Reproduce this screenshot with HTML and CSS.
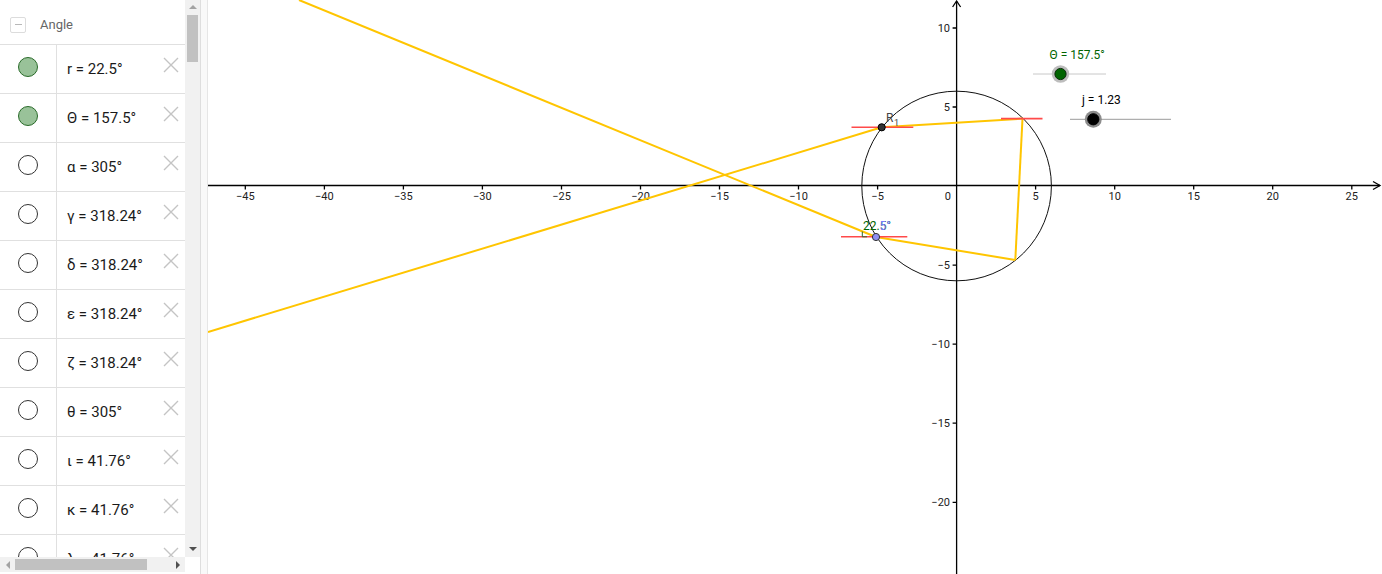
FILE: index.html
```html
<!DOCTYPE html>
<html>
<head>
<meta charset="utf-8">
<title>Angle</title>
<link rel="stylesheet" href="styles.css">
</head>
<body>
<div class="app">
  <div class="panel">
    <div class="list">
      <div class="header"><span class="collapse"><span class="minus"></span></span><span class="title">Angle</span></div>
      <div class="row"><div class="marker"><span class="dot on"></span></div><div class="cell"><span class="expr">r = 22.5°</span><svg class="del" viewBox="0 0 16 16"><path d="M1 1L15 15M15 1L1 15"/></svg></div></div>
      <div class="row"><div class="marker"><span class="dot on"></span></div><div class="cell"><span class="expr">Θ = 157.5°</span><svg class="del" viewBox="0 0 16 16"><path d="M1 1L15 15M15 1L1 15"/></svg></div></div>
      <div class="row"><div class="marker"><span class="dot"></span></div><div class="cell"><span class="expr">α = 305°</span><svg class="del" viewBox="0 0 16 16"><path d="M1 1L15 15M15 1L1 15"/></svg></div></div>
      <div class="row"><div class="marker"><span class="dot"></span></div><div class="cell"><span class="expr">γ = 318.24°</span><svg class="del" viewBox="0 0 16 16"><path d="M1 1L15 15M15 1L1 15"/></svg></div></div>
      <div class="row"><div class="marker"><span class="dot"></span></div><div class="cell"><span class="expr">δ = 318.24°</span><svg class="del" viewBox="0 0 16 16"><path d="M1 1L15 15M15 1L1 15"/></svg></div></div>
      <div class="row"><div class="marker"><span class="dot"></span></div><div class="cell"><span class="expr">ε = 318.24°</span><svg class="del" viewBox="0 0 16 16"><path d="M1 1L15 15M15 1L1 15"/></svg></div></div>
      <div class="row"><div class="marker"><span class="dot"></span></div><div class="cell"><span class="expr">ζ = 318.24°</span><svg class="del" viewBox="0 0 16 16"><path d="M1 1L15 15M15 1L1 15"/></svg></div></div>
      <div class="row"><div class="marker"><span class="dot"></span></div><div class="cell"><span class="expr">θ = 305°</span><svg class="del" viewBox="0 0 16 16"><path d="M1 1L15 15M15 1L1 15"/></svg></div></div>
      <div class="row"><div class="marker"><span class="dot"></span></div><div class="cell"><span class="expr">ι = 41.76°</span><svg class="del" viewBox="0 0 16 16"><path d="M1 1L15 15M15 1L1 15"/></svg></div></div>
      <div class="row"><div class="marker"><span class="dot"></span></div><div class="cell"><span class="expr">κ = 41.76°</span><svg class="del" viewBox="0 0 16 16"><path d="M1 1L15 15M15 1L1 15"/></svg></div></div>
      <div class="row"><div class="marker"><span class="dot"></span></div><div class="cell"><span class="expr">λ = 41.76°</span><svg class="del" viewBox="0 0 16 16"><path d="M1 1L15 15M15 1L1 15"/></svg></div></div>
    </div>
    <div class="vscroll">
      <span class="btn"><span class="tri up"></span></span>
      <span class="vthumb"></span>
      <span class="spacer"></span>
      <span class="btn"><span class="tri down"></span></span>
    </div>
    <div class="hscroll">
      <span class="btn"><span class="tri left"></span></span>
      <span class="hthumb"></span>
      <span class="spacer"></span>
      <span class="btn"><span class="tri right"></span></span>
    </div>
    <div class="corner"></div>
  </div>
  <div class="divider"></div>
  <div class="graphics">
    <svg class="canvas" width="1174" height="574" viewBox="208 0 1174 574">
      <g class="ticklabels">
        <text x="245.3" y="200" text-anchor="middle">−45</text>
        <text x="324.4" y="200" text-anchor="middle">−40</text>
        <text x="403.4" y="200" text-anchor="middle">−35</text>
        <text x="482.4" y="200" text-anchor="middle">−30</text>
        <text x="561.5" y="200" text-anchor="middle">−25</text>
        <text x="640.5" y="200" text-anchor="middle">−20</text>
        <text x="719.5" y="200" text-anchor="middle">−15</text>
        <text x="798.5" y="200" text-anchor="middle">−10</text>
        <text x="877.6" y="200" text-anchor="middle">−5</text>
        <text x="951" y="200" text-anchor="end">0</text>
        <text x="1035.6" y="200" text-anchor="middle">5</text>
        <text x="1114.7" y="200" text-anchor="middle">10</text>
        <text x="1193.7" y="200" text-anchor="middle">15</text>
        <text x="1272.7" y="200" text-anchor="middle">20</text>
        <text x="1351.8" y="200" text-anchor="middle">25</text>
        <text x="950" y="32" text-anchor="end">10</text>
        <text x="950" y="111" text-anchor="end">5</text>
        <text x="950" y="269" text-anchor="end">−5</text>
        <text x="950" y="348" text-anchor="end">−10</text>
        <text x="950" y="427" text-anchor="end">−15</text>
        <text x="950" y="506" text-anchor="end">−20</text>
      </g>
      <g class="axes">
        <line x1="208" y1="185.5" x2="1380" y2="185.5"/>
        <polyline points="1373,181.5 1380,185.5 1373,189.5"/>
        <line x1="956.6" y1="1" x2="956.6" y2="574"/>
        <polyline points="952.6,7 956.6,1 960.6,7"/>
        <path d="M245.3 185.5v4M324.4 185.5v4M403.4 185.5v4M482.4 185.5v4M561.5 185.5v4M640.5 185.5v4M719.5 185.5v4M798.5 185.5v4M877.6 185.5v4M1035.6 185.5v4M1114.7 185.5v4M1193.7 185.5v4M1272.7 185.5v4M1351.8 185.5v4"/>
        <path d="M952.6 28h4M952.6 107h4M952.6 265.1h4M952.6 344.2h4M952.6 423.2h4M952.6 502.3h4"/>
      </g>
      <circle class="circ" cx="956.6" cy="186" r="94.8"/>
      <g class="yellow">
        <line x1="299" y1="0" x2="876" y2="237"/>
        <line x1="208" y1="332" x2="881.7" y2="127.3"/>
        <line x1="881.7" y1="127.3" x2="1022.5" y2="118.6"/>
        <line x1="1022.5" y1="118.6" x2="1015.3" y2="260"/>
        <line x1="1015.3" y1="260" x2="876" y2="237"/>
      </g>
      <g class="red">
        <line x1="851.5" y1="127.3" x2="913.3" y2="127.3"/>
        <line x1="1001" y1="118.6" x2="1042.5" y2="118.6"/>
        <line x1="841" y1="236.8" x2="907.3" y2="236.8"/>
      </g>
      <polyline class="amark" points="862.3,231.5 862.3,236.8 867,236.8"/>
      <text class="lbl-r" x="886" y="121.5">R<tspan class="sub" dx="0.5" dy="4">1</tspan></text>
      <text class="lbl-g" x="863" y="229.5">22.5°</text>
      <text class="lbl-b" x="879.5" y="229.5">5°</text>
      <circle class="pt-dark" cx="881.7" cy="127.3" r="3.6"/>
      <circle class="pt-blue" cx="876" cy="237" r="3.6"/>
      <g class="slider">
        <line class="track-light" x1="1033" y1="74" x2="1106" y2="74"/>
        <circle class="halo-light" cx="1060.5" cy="74" r="8.7"/>
        <circle class="knob-green" cx="1060.5" cy="74" r="5.6"/>
        <text class="lbl-theta" x="1049.5" y="58.7">Θ = 157.5°</text>
      </g>
      <g class="slider">
        <line class="track-dark" x1="1070" y1="119.3" x2="1171" y2="119.3"/>
        <circle class="halo-dark" cx="1093.3" cy="119.3" r="8.5"/>
        <circle class="knob-black" cx="1093.3" cy="119.3" r="5.6"/>
        <text class="lbl-j" x="1082" y="104">j = 1.23</text>
      </g>
    </svg>
  </div>
</div>
</body>
</html>
```

FILE: styles.css
```css
* { box-sizing: border-box; }
html, body { margin: 0; padding: 0; background: #fff; }
body { font-family: Roboto, "Noto Sans", "DejaVu Sans", sans-serif; overflow: hidden; }

.app { display: flex; width: 1382px; height: 574px; overflow: hidden; }

.panel {
  width: 200px;
  height: 574px;
  display: grid;
  grid-template-columns: 185px 15px;
  grid-template-rows: 557px 15px;
  align-content: start;
  background: #fff;
}

.list { overflow: hidden; height: 557px; }

.header {
  height: 45px;
  border-bottom: 1px solid #e0e0e0;
  display: flex;
  align-items: center;
  padding: 5px 0 0 10px;
}
.collapse {
  width: 16px; height: 16px;
  border: 1px solid #dcdcdc;
  border-radius: 2px;
  display: flex; align-items: center; justify-content: center;
}
.minus { width: 7px; height: 1px; background: #b8b8b8; }
.title { margin-left: 14px; font-size: 13px; color: #666; }

.row {
  height: 49px;
  border-bottom: 1px solid #e0e0e0;
  display: flex;
}
.marker {
  width: 57px;
  border-right: 1px solid #e0e0e0;
  display: flex;
  justify-content: center;
  padding-top: 12px;
}
.dot {
  width: 20px; height: 20px;
  border-radius: 50%;
  border: 1px solid #333;
  background: #fff;
  margin-left: -1px;
}
.dot.on { background: #99c299; border-color: #2a6b2a; }

.cell {
  flex: 1;
  display: flex;
  align-items: center;
  padding-left: 10px;
  padding-bottom: 1px;
}
.expr { font-size: 15px; color: #1a1a1a; white-space: nowrap; }
.del {
  width: 16px; height: 16px;
  margin-left: auto;
  margin-right: 6px;
  align-self: flex-start;
  margin-top: 12px;
  flex: none;
}
.del path { stroke: #c4c4c4; stroke-width: 1.4; fill: none; }

.vscroll {
  background: #f1f1f1;
  display: flex;
  flex-direction: column;
  height: 557px;
}
.hscroll {
  background: #f1f1f1;
  display: flex;
  flex-direction: row;
}
.corner { background: #fff; }
.btn { flex: none; width: 15px; height: 15px; display: flex; align-items: center; justify-content: center; }
.spacer { flex: 1; }
.vthumb { flex: none; height: 47px; margin: 0 2px; background: #c1c1c1; }
.hthumb { flex: none; width: 132px; height: 11px; margin-top: 2px; background: #c1c1c1; }
.tri { width: 0; height: 0; }
.tri.up { border-left: 4px solid transparent; border-right: 4px solid transparent; border-bottom: 4px solid #a3a3a3; margin-top: -1px; }
.tri.down { border-left: 4px solid transparent; border-right: 4px solid transparent; border-top: 4px solid #505050; margin-top: -1px; }
.tri.left { border-top: 4px solid transparent; border-bottom: 4px solid transparent; border-right: 4px solid #a3a3a3; }
.tri.right { border-top: 4px solid transparent; border-bottom: 4px solid transparent; border-left: 4px solid #505050; }

.divider {
  width: 8px;
  height: 574px;
  background: #f9f9f9;
  border-left: 1px solid #dedede;
  border-right: 1px solid #e6e6e6;
}

.graphics { flex: 1; height: 574px; overflow: hidden; background: #fff; }
.canvas { display: block; }

.ticklabels text { font-family: Roboto, "Noto Sans", sans-serif; font-size: 11px; fill: #222; }
.axes line, .axes polyline, .axes path { stroke: #000; stroke-width: 1.3; fill: none; }
.circ { fill: none; stroke: #111; stroke-width: 1; }
.yellow line { stroke: #ffc500; stroke-width: 2; }
.red line { stroke: #ff4a4a; stroke-width: 1.6; }
.amark { fill: none; stroke: #2f6b2f; stroke-width: 1; }
.lbl-r { font-size: 12px; fill: #444; }
.lbl-r .sub { font-size: 9px; }
.lbl-g { font-size: 12px; fill: #006400; }
.lbl-b { font-size: 12px; fill: #7b7bff; }
.pt-dark { fill: #333; stroke: #000; stroke-width: 1; }
.pt-blue { fill: #8f8ff2; stroke: #333; stroke-width: 1; }
.track-light { stroke: #c8c8c8; stroke-width: 1; }
.track-dark { stroke: #9a9a9a; stroke-width: 1; }
.halo-light { fill: #bdbdbd; }
.halo-dark { fill: #8c8c8c; }
.knob-green { fill: #006400; stroke: #0a2a0a; stroke-width: 1; }
.knob-black { fill: #000; stroke: #000; stroke-width: 1; }
.lbl-theta { font-size: 12px; fill: #006400; }
.lbl-j { font-size: 12px; fill: #000; }
```
